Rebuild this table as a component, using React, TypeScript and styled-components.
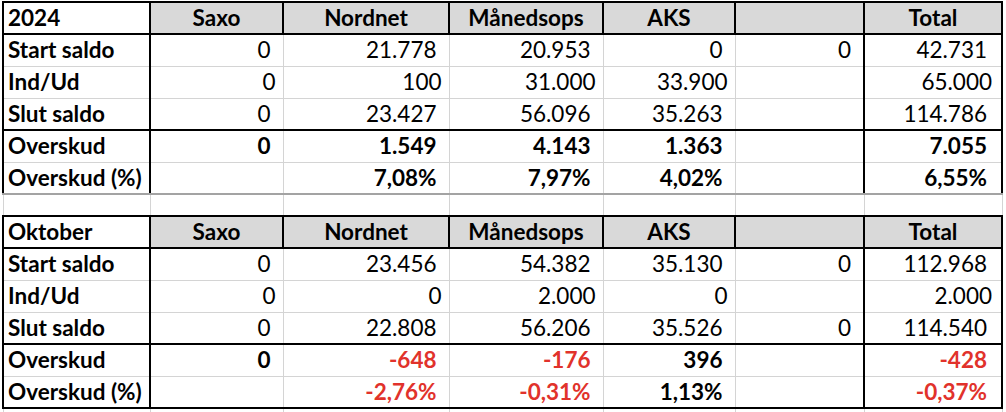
import React from "react";
import styled, { createGlobalStyle, css } from "styled-components";

const GlobalStyle = createGlobalStyle`
  html, body {
    margin: 0;
    padding: 0;
    background: #ffffff;
  }
`;

const GRID = "#d4d4d4";
const INK = "#000000";
const RED = "#e1322b";

const columns = [147, 133, 166, 154, 132, 129, 138];
const heads = ["Saxo", "Nordnet", "Månedsops", "AKS", "", "Total"];

type Kind = "plain" | "flow" | "result";

interface Row {
  label: string;
  kind: Kind;
  values: string[];
}

interface Block {
  title: string;
  rows: Row[];
  closing: "soft" | "hard";
}

const blocks: Block[] = [
  {
    title: "2024",
    closing: "soft",
    rows: [
      { label: "Start saldo", kind: "plain", values: ["0", "21.778", "20.953", "0", "0", "42.731"] },
      { label: "Ind/Ud", kind: "flow", values: ["0", "100", "31.000", "33.900", "", "65.000"] },
      { label: "Slut saldo", kind: "plain", values: ["0", "23.427", "56.096", "35.263", "", "114.786"] },
      { label: "Overskud", kind: "result", values: ["0", "1.549", "4.143", "1.363", "", "7.055"] },
      { label: "Overskud (%)", kind: "result", values: ["", "7,08%", "7,97%", "4,02%", "", "6,55%"] },
    ],
  },
  {
    title: "Oktober",
    closing: "hard",
    rows: [
      { label: "Start saldo", kind: "plain", values: ["0", "23.456", "54.382", "35.130", "0", "112.968"] },
      { label: "Ind/Ud", kind: "flow", values: ["0", "0", "2.000", "0", "", "2.000"] },
      { label: "Slut saldo", kind: "plain", values: ["0", "22.808", "56.206", "35.526", "0", "114.540"] },
      { label: "Overskud", kind: "result", values: ["0", "-648", "-176", "396", "", "-428"] },
      { label: "Overskud (%)", kind: "result", values: ["", "-2,76%", "-0,31%", "1,13%", "", "-0,37%"] },
    ],
  },
];

const Page = styled.div`
  padding: 1px 0 0 2px;
  width: 1006px;
  overflow: hidden;
`;

const Sheet = styled.table`
  width: 999px;
  border-collapse: collapse;
  table-layout: fixed;
  font-family: Lato, "Liberation Sans", sans-serif;
  font-size: 22.5px;
  color: ${INK};
`;

const Col = styled.col<{ $w: number }>`
  width: ${(p) => p.$w}px;
`;

const Line = styled.tr<{ $h?: number }>`
  height: ${(p) => p.$h ?? 32}px;
`;

const Cell = styled.td<{
  $strongLeft?: boolean;
  $strongRight?: boolean;
  $strongTop?: boolean;
  $bottom?: "soft" | "hard";
}>`
  padding: 0 12px 0 4px;
  border: 1px solid ${GRID};
  white-space: nowrap;
  overflow: hidden;
  line-height: 1;
  ${(p) => p.$strongLeft && css`border-left: 2px solid ${INK};`}
  ${(p) => p.$strongRight && css`border-right: 2px solid ${INK};`}
  ${(p) => p.$strongTop && css`border-top: 2px solid ${INK};`}
  ${(p) => p.$bottom === "soft" && css`border-bottom: 2px solid #a3a3a3;`}
  ${(p) => p.$bottom === "hard" && css`border-bottom: 2px solid ${INK};`}
`;

const TitleCell = styled(Cell)`
  font-weight: 700;
  text-align: left;
  border: 2px solid ${INK};
`;

const HeadCell = styled(Cell)`
  font-weight: 700;
  text-align: center;
  padding: 0;
  background: #d9d9d9;
  border: 2px solid ${INK};
`;

const LabelCell = styled(Cell)`
  font-weight: 700;
  text-align: left;
  padding-right: 0;
  border-left: 2px solid ${INK};
  border-right: 2px solid ${INK};
`;

const NumCell = styled(Cell)<{ $kind: Kind; $total?: boolean; $neg?: boolean }>`
  text-align: right;
  font-weight: ${(p) => (p.$kind === "result" ? 700 : 400)};
  color: ${(p) => (p.$neg ? RED : INK)};
  padding-right: ${(p) => {
    const base = p.$kind === "flow" ? 7 : 12;
    return p.$total ? base + 2 : base;
  }}px;
`;

const SpacerCell = styled.td`
  padding: 0;
  border-left: 1px solid ${GRID};
  border-right: 1px solid ${GRID};
  font-size: 0;
  line-height: 0;
`;

function SheetBlock({ block }: { block: Block }) {
  return (
    <>
      <Line>
        <TitleCell>{block.title}</TitleCell>
        {heads.map((h, i) => (
          <HeadCell key={i}>{h}</HeadCell>
        ))}
      </Line>
      {block.rows.map((row, r) => {
        const last = r === block.rows.length - 1;
        const strongTop = row.label === "Overskud";
        const bottom = last ? block.closing : undefined;
        return (
          <Line key={row.label}>
            <LabelCell $strongTop={strongTop} $bottom={bottom}>
              {row.label}
            </LabelCell>
            {row.values.map((v, c) => {
              const total = c === row.values.length - 1;
              return (
                <NumCell
                  key={c}
                  $kind={row.kind}
                  $total={total}
                  $neg={v.startsWith("-")}
                  $strongLeft={total}
                  $strongRight={total}
                  $strongTop={strongTop}
                  $bottom={bottom}
                >
                  {v}
                </NumCell>
              );
            })}
          </Line>
        );
      })}
    </>
  );
}

export default function App() {
  return (
    <Page>
      <GlobalStyle />
      <Sheet>
        <colgroup>
          {columns.map((w, i) => (
            <Col key={i} $w={w} />
          ))}
        </colgroup>
        <tbody>
          <SheetBlock block={blocks[0]} />
          <Line $h={22}>
            {columns.map((_, i) => (
              <SpacerCell key={i} />
            ))}
          </Line>
          <SheetBlock block={blocks[1]} />
          <Line $h={6}>
            {columns.map((_, i) => (
              <SpacerCell key={i} />
            ))}
          </Line>
        </tbody>
      </Sheet>
    </Page>
  );
}
